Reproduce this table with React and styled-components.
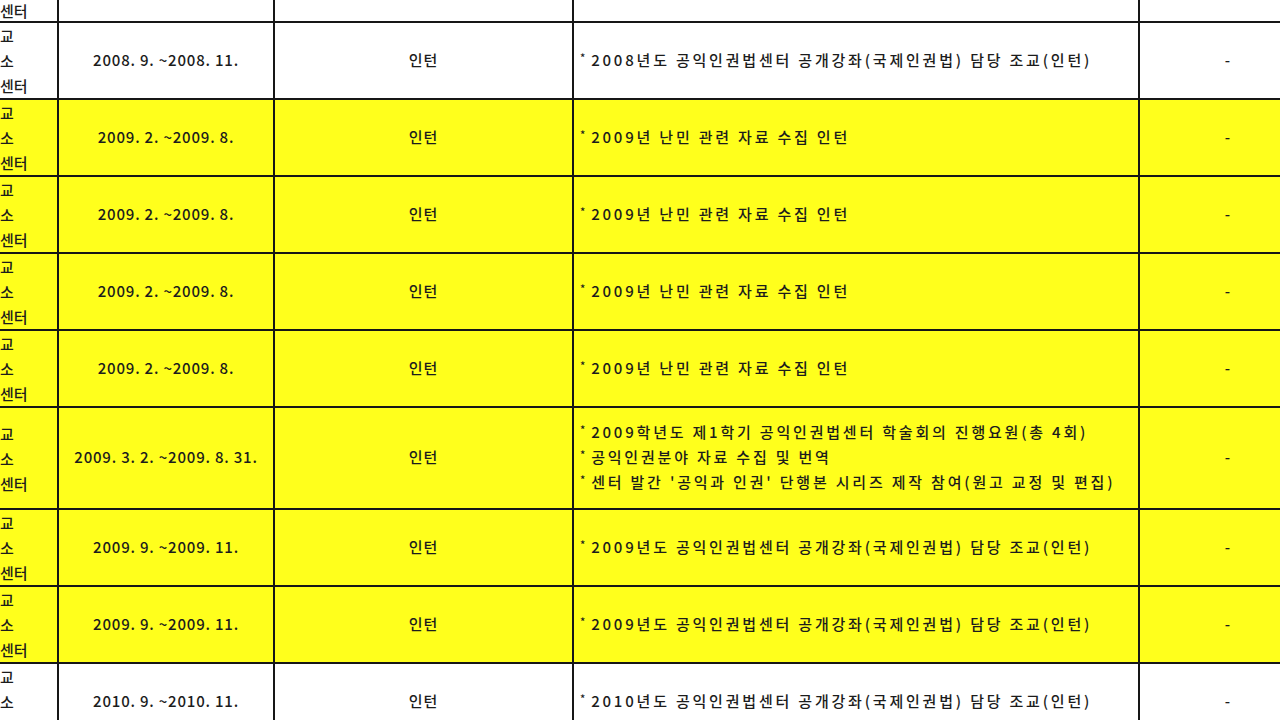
import React from 'react';
import styled, { createGlobalStyle } from 'styled-components';

const Global = createGlobalStyle`
  html, body { margin: 0; padding: 0; background: #fff; overflow: hidden; }
  body { font-family: "Noto Sans CJK KR", "Noto Sans", sans-serif; }
`;

const Viewport = styled.div`
  width: 1280px;
  height: 720px;
  overflow: hidden;
  background: #fff;
`;

const Sheet = styled.table`
  width: 1316px;
  table-layout: fixed;
  border-collapse: collapse;
  font-size: 15px;
  font-weight: 500;
  color: #1c1c1c;
`;

const Row = styled.tr`
  height: ${(p) => p.$h}px;
  background: ${(p) => (p.$yellow ? '#ffff1c' : '#ffffff')};
`;

const Cell = styled.td`
  border: 2px solid #161616;
  border-top: ${(p) => (p.$noTop ? 'none' : '2px solid #161616')};
  padding: ${(p) => p.$pad || '0 0 3px 0'};
  text-align: ${(p) => p.$align || 'center'};
  letter-spacing: ${(p) => p.$ls || '1px'};
  vertical-align: middle;
  line-height: ${(p) => p.$lh || 25}px;
  white-space: nowrap;
  overflow: hidden;
  &:first-child { border-left: none; }
  &:last-child { border-right: none; }
`;

const Line = styled.div`
  display: block;
`;

const Bullet = styled.span`
  display: inline-block;
  font-size: 11px;
  line-height: 10px;
  vertical-align: top;
  margin-top: 5px;
  margin-right: 3px;
`;

const rows = [
  { date: '2008. 9. ~2008. 11.', desc: ['2008년도 공익인권법센터 공개강좌(국제인권법) 담당 조교(인턴)'], yellow: false },
  { date: '2009. 2. ~2009. 8.', desc: ['2009년 난민 관련 자료 수집 인턴'], yellow: true },
  { date: '2009. 2. ~2009. 8.', desc: ['2009년 난민 관련 자료 수집 인턴'], yellow: true },
  { date: '2009. 2. ~2009. 8.', desc: ['2009년 난민 관련 자료 수집 인턴'], yellow: true },
  { date: '2009. 2. ~2009. 8.', desc: ['2009년 난민 관련 자료 수집 인턴'], yellow: true },
  {
    date: '2009. 3. 2. ~2009. 8. 31.',
    desc: [
      '2009학년도 제1학기 공익인권법센터 학술회의 진행요원(총 4회)',
      '공익인권분야 자료 수집 및 번역',
      "센터 발간 '공익과 인권' 단행본 시리즈 제작 참여(원고 교정 및 편집)",
    ],
    yellow: true,
    h: 102,
  },
  { date: '2009. 9. ~2009. 11.', desc: ['2009년도 공익인권법센터 공개강좌(국제인권법) 담당 조교(인턴)'], yellow: true },
  { date: '2009. 9. ~2009. 11.', desc: ['2009년도 공익인권법센터 공개강좌(국제인권법) 담당 조교(인턴)'], yellow: true },
  { date: '2010. 9. ~2010. 11.', desc: ['2010년도 공익인권법센터 공개강좌(국제인권법) 담당 조교(인턴)'], yellow: false },
];

const OrgCell = ({ partial }) =>
  partial ? (
    <Cell $align="left" $ls="0" $noTop $lh={19} $pad="0">
      <Line>센터</Line>
    </Cell>
  ) : (
    <Cell $align="left" $ls="0" $pad="0">
      <Line>교</Line>
      <Line>소</Line>
      <Line>센터</Line>
    </Cell>
  );

export default function App() {
  return (
    <Viewport>
      <Global />
      <Sheet>
        <colgroup>
          <col style={{ width: 58 }} />
          <col style={{ width: 216 }} />
          <col style={{ width: 299 }} />
          <col style={{ width: 566 }} />
          <col style={{ width: 177 }} />
        </colgroup>
        <tbody>
          <Row $h={22}>
            <OrgCell partial />
            <Cell $noTop $pad="0" />
            <Cell $noTop $pad="0" />
            <Cell $noTop $pad="0" />
            <Cell $noTop $pad="0" />
          </Row>
          {rows.map((r, i) => (
            <Row key={i} $h={r.h || 77} $yellow={r.yellow}>
              <OrgCell />
              <Cell $ls="0.8px">{r.date}</Cell>
              <Cell $ls="1px">인턴</Cell>
              <Cell $align="left" $pad="0 0 3px 6px" $ls="2.8px">
                {r.desc.map((d, j) => (
                  <Line key={j}>
                    <Bullet>*</Bullet>
                    {d}
                  </Line>
                ))}
              </Cell>
              <Cell>-</Cell>
            </Row>
          ))}
        </tbody>
      </Sheet>
    </Viewport>
  );
}
